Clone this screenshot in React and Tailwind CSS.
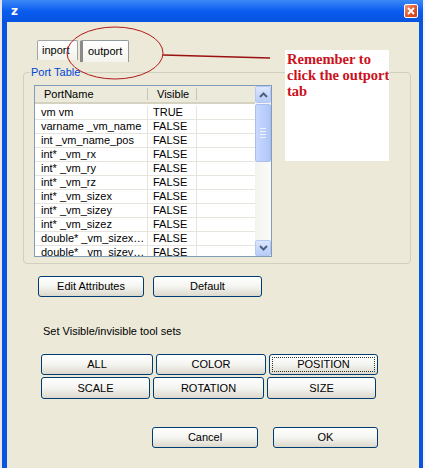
import React from "react";

const FONT = { fontFamily: 'Tahoma, "Liberation Sans", Arial, sans-serif' };

const rows = [
  ["vm vm", "TRUE"],
  ["varname _vm_name", "FALSE"],
  ["int _vm_name_pos", "FALSE"],
  ["int* _vm_rx", "FALSE"],
  ["int* _vm_ry", "FALSE"],
  ["int* _vm_rz", "FALSE"],
  ["int* _vm_sizex", "FALSE"],
  ["int* _vm_sizey", "FALSE"],
  ["int* _vm_sizez", "FALSE"],
  ["double* _vm_sizex…", "FALSE"],
  ["double* _vm_sizey…", "FALSE"],
];

function XPButton({ children, w, h = "h-[21px]", focus = false }) {
  return (
    <div
      className={`${w} ${h} shrink-0 rounded-[3px] border border-[#003c74] bg-gradient-to-b from-[#ffffff] via-[#f4f4f0] to-[#dcd8cc] flex items-center justify-center p-[2px]`}
    >
      <div
        className={`w-full h-full flex items-center justify-center text-[11px] text-black ${
          focus ? "border border-dotted border-[#333]" : ""
        }`}
      >
        {children}
      </div>
    </div>
  );
}

function Chevron({ up }) {
  return (
    <svg width="9" height="6" viewBox="0 0 9 6">
      <path
        d={up ? "M1 5 L4.5 1.5 L8 5" : "M1 1 L4.5 4.5 L8 1"}
        fill="none"
        stroke="#4d6185"
        strokeWidth="2"
      />
    </svg>
  );
}

function Scrollbar() {
  return (
    <div className="w-[16px] shrink-0 flex flex-col bg-[#f4f4f0]">
      <div className="h-[17px] rounded-[2px] border border-[#b4c8f6] bg-gradient-to-b from-[#dce6fd] to-[#b8ccf8] flex items-center justify-center">
        <Chevron up />
      </div>
      <div className="h-[58px] mt-[1px] rounded-[2px] border border-[#a9bff0] bg-gradient-to-r from-[#c9d8fc] via-[#bcd0fb] to-[#b0c6f6] flex flex-col items-center justify-center gap-[2px]">
        <div className="w-[6px] h-[1px] bg-[#eef3fe]" />
        <div className="w-[6px] h-[1px] bg-[#eef3fe]" />
        <div className="w-[6px] h-[1px] bg-[#eef3fe]" />
        <div className="w-[6px] h-[1px] bg-[#eef3fe]" />
      </div>
      <div className="flex-1 bg-gradient-to-r from-[#f3f3ee] to-[#fbfbf8]" />
      <div className="h-[16px] rounded-[2px] border border-[#b4c8f6] bg-gradient-to-b from-[#dce6fd] to-[#b8ccf8] flex items-center justify-center">
        <Chevron />
      </div>
    </div>
  );
}

function PortTable() {
  return (
    <div className="w-[238px] h-[172px] border border-[#7f9db9] bg-white flex">
      <div className="flex-1 overflow-hidden flex flex-col">
        <div className="h-[18px] shrink-0 flex bg-[#ebeadb] border-b-[2px] border-[#d6d2c2] text-[11px] text-black">
          <div className="w-[113px] shrink-0 flex items-center pl-[9px] border-r border-[#c7c5b2] my-[2px]">
            PortName
          </div>
          <div className="w-[49px] shrink-0 flex items-center pl-[9px] border-r border-[#c7c5b2] my-[2px]">
            Visible
          </div>
          <div className="flex-1" />
        </div>
        <div className="pt-[2px] flex flex-col">
          {rows.map(([n, v], i) => (
            <div key={i} className="h-[14px] shrink-0 flex text-[11px] leading-[13px] text-black border-b border-[#e6e4dc]">
              <div className="w-[113px] shrink-0 pl-[6px] border-r border-[#e6e4dc] whitespace-nowrap overflow-hidden">
                {n}
              </div>
              <div className="w-[49px] shrink-0 pl-[5px] border-r border-[#e6e4dc]">{v}</div>
              <div className="flex-1" />
            </div>
          ))}
        </div>
      </div>
      <Scrollbar />
    </div>
  );
}

export default function App() {
  return (
    <div className="relative w-[425px] h-[468px] bg-[#e6e6ee] overflow-hidden flex" style={FONT}>
      <div className="ml-[2px] w-[421px] h-full flex flex-col bg-[#0a55e0]">
        {/* Title bar */}
        <div className="h-[22px] shrink-0 flex items-center justify-between bg-gradient-to-b from-[#3b88f5] via-[#0a5cf0] to-[#0653de] pl-[9px] pr-[5px]">
          <span className="text-white font-bold text-[12px] leading-none" style={{ fontFamily: '"DejaVu Sans", sans-serif' }}>
            z
          </span>
          <div className="w-[14px] h-[14px] rounded-[2px] border border-white bg-gradient-to-br from-[#f09a7a] via-[#e2582f] to-[#c8401c] flex items-center justify-center">
            <svg width="8" height="8" viewBox="0 0 8 8">
              <path d="M1 1 L7 7 M7 1 L1 7" stroke="white" strokeWidth="1.8" />
            </svg>
          </div>
        </div>
        {/* Body */}
        <div className="flex-1 ml-[5px] mr-[4px] bg-[#ece9d8] flex flex-col">
          {/* Tabs */}
          <div className="mt-[18px] ml-[30px] flex items-start gap-[2px] text-[11px] text-black">
            <div className="w-[41px] h-[20px] border border-[#a0a6a6] border-b-0 rounded-t-[2px] bg-gradient-to-b from-white to-[#f2f1ea] flex items-center pl-[4px]">
              inport
            </div>
            <div className="w-[49px] h-[22px] border border-[#919b9c] border-l-[3px] border-l-[#8a8a86] border-b-0 rounded-t-[2px] bg-gradient-to-b from-white to-[#f4f3ee] flex items-center pl-[5px]">
              outport
            </div>
          </div>
          {/* Group box */}
          <div className="relative mt-[10px] ml-[16px] w-[388px] h-[192px] border border-[#d0d0bf] rounded-[4px] pt-[12px] pl-[10px]">
            <span className="absolute -top-[8px] left-[6px] bg-[#ece9d8] px-[1px] text-[11px] leading-[14px] text-[#0046d5]">
              Port Table
            </span>
            <PortTable />
          </div>
          {/* Edit / Default */}
          <div className="mt-[12px] ml-[31px] flex gap-[9px]">
            <XPButton w="w-[106px]">Edit Attributes</XPButton>
            <XPButton w="w-[109px]">Default</XPButton>
          </div>
          <div className="mt-[28px] ml-[36px] text-[11px] leading-[13px] text-black">
            Set Visible/invisible tool sets
          </div>
          {/* tool set buttons */}
          <div className="mt-[16px] ml-[34px] flex flex-col gap-[2px]">
            <div className="flex gap-[3px]">
              <XPButton w="w-[112px]">ALL</XPButton>
              <XPButton w="w-[110px]">COLOR</XPButton>
              <XPButton w="w-[109px]" focus>
                POSITION
              </XPButton>
            </div>
            <div className="flex gap-[3px]">
              <XPButton w="w-[109px]" h="h-[22px]">SCALE</XPButton>
              <XPButton w="w-[111px]" h="h-[22px]">ROTATION</XPButton>
              <XPButton w="w-[109px]" h="h-[22px]">SIZE</XPButton>
            </div>
          </div>
          {/* Cancel / OK */}
          <div className="mt-[28px] ml-[145px] flex gap-[15px]">
            <XPButton w="w-[106px]">Cancel</XPButton>
            <XPButton w="w-[105px]">OK</XPButton>
          </div>
        </div>
      </div>
      <div className="w-[2px] h-full bg-[#f4f4f8]" />

      {/* Annotation overlay */}
      <svg className="absolute left-0 top-0 pointer-events-none" width="425" height="468">
        <ellipse cx="115" cy="53" rx="48" ry="26" fill="none" stroke="#b01818" strokeWidth="1" />
        <path d="M163 55 L270 58" stroke="#9a1010" strokeWidth="1.3" fill="none" />
      </svg>
      <div
        className="absolute left-[285px] top-[50px] w-[104px] h-[111px] bg-white pl-[2px] pt-[1px] text-[14.5px] leading-[16px] font-bold text-[#cc1020] whitespace-nowrap overflow-hidden"
        style={{ fontFamily: '"Liberation Serif", "Times New Roman", serif' }}
      >
        Remember to
        <br />
        click the outport
        <br />
        tab
      </div>
    </div>
  );
}
